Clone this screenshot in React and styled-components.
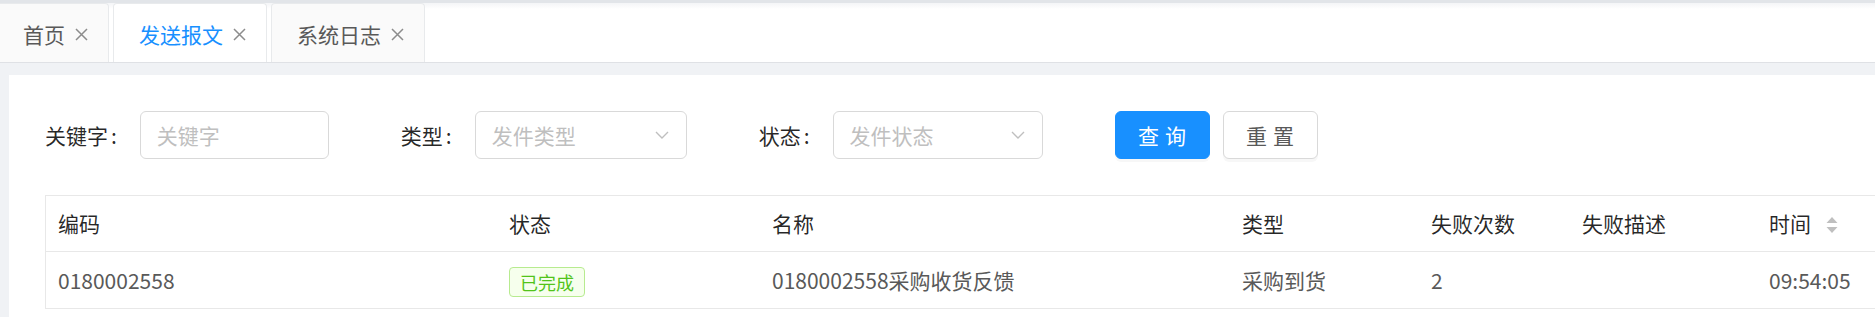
import React from 'react';
import styled, { createGlobalStyle } from 'styled-components';

const GlobalStyle = createGlobalStyle`
    html, body {
        margin: 0;
        padding: 0;
        overflow: hidden;
        background: #f0f2f5;
    }
    body {
        font-family: "Noto Sans CJK SC", "Noto Sans", sans-serif;
    }
`;

const Page = styled.div`
    width: 1875px;
    height: 317px;
    display: flex;
    flex-direction: column;
    overflow: hidden;
    background: #f0f2f5;
`;

// 顶部标签栏
const TopLine = styled.div`
    height: 3px;
    background: #e2e5e9;
`;

const TabBar = styled.div`
    display: flex;
    align-items: flex-end;
    gap: 4px;
    height: 59px;
    background: linear-gradient(#f4f5f7, #ffffff 6px);
    border-bottom: 1px solid #dfe1e5;
`;

const Tab = styled.div`
    display: flex;
    align-items: center;
    height: 59px;
    box-sizing: border-box;
    padding: 2px 20px 0 25px;
    border: 1px solid #e8eaec;
    border-bottom: none;
    border-radius: 4px 4px 0 0;
    background: ${p => (p.$active ? '#ffffff' : '#fafafa')};
    color: ${p => (p.$active ? '#1890ff' : '#595959')};
    font-size: 21px;
    line-height: 1;
    &:first-child {
        margin-left: -3px;
    }
`;

const Close = styled.svg`
    width: 13px;
    height: 13px;
    margin-left: 10px;
`;

// 内容区
const Content = styled.div`
    flex: 1;
    display: flex;
    padding: 12px 0 0 9px;
`;

const Card = styled.div`
    flex: 1;
    background: #ffffff;
    padding: 36px 0 0 36px;
    overflow: hidden;
`;

const FormRow = styled.div`
    display: flex;
    align-items: center;
    height: 48px;
`;

const FormItem = styled.div`
    display: flex;
    align-items: center;
    margin-right: 72px;
`;

const Label = styled.label`
    font-size: 21px;
    color: rgba(0, 0, 0, 0.85);
    white-space: nowrap;
    &::after {
        content: ':';
        margin: 0 23px 0 3px;
    }
`;

const Input = styled.input`
    width: 189px;
    height: 48px;
    box-sizing: border-box;
    padding: 0 16px;
    border: 1px solid #d9d9d9;
    border-radius: 6px;
    font: inherit;
    font-size: 21px;
    color: #595959;
    outline: none;
    &::placeholder {
        color: #bfbfbf;
    }
`;

const Select = styled.div`
    display: flex;
    align-items: center;
    justify-content: space-between;
    width: ${p => p.$width}px;
    height: 48px;
    box-sizing: border-box;
    padding: 0 17px 0 16px;
    border: 1px solid #d9d9d9;
    border-radius: 6px;
    font-size: 21px;
    color: #bfbfbf;
`;

const Buttons = styled.div`
    display: flex;
    gap: 13px;
`;

const Button = styled.button`
    width: 95px;
    height: 48px;
    box-sizing: border-box;
    padding: 0 0 0 6px;
    border: 1px solid ${p => (p.$primary ? '#1890ff' : '#d9d9d9')};
    border-radius: 6px;
    background: ${p => (p.$primary ? '#1890ff' : '#ffffff')};
    color: ${p => (p.$primary ? '#ffffff' : '#595959')};
    font: inherit;
    font-size: 21px;
    letter-spacing: 6px;
    box-shadow: 0 3px 0 rgba(0, 0, 0, 0.03);
`;

// 表格
const Table = styled.table`
    margin-top: 36px;
    width: 1911px;
    table-layout: fixed;
    border-collapse: separate;
    border-spacing: 0;
    border-top: 1px solid #e8e8e8;
    border-left: 1px solid #e8e8e8;
    font-size: 21px;
`;

const Th = styled.th`
    padding: 11px 12px;
    line-height: 33px;
    text-align: left;
    font-weight: 400;
    color: rgba(0, 0, 0, 0.85);
    border-bottom: 1px solid #e8e8e8;
    white-space: nowrap;
`;

const Td = styled.td`
    padding: 11px 12px;
    line-height: 33px;
    color: #595959;
    border-bottom: 1px solid #e8e8e8;
    white-space: nowrap;
`;

const Sorter = styled.svg`
    width: 12px;
    height: 18px;
    margin-left: 15px;
    vertical-align: -2px;
`;

const Tag = styled.span`
    display: inline-block;
    height: 30px;
    line-height: 28px;
    box-sizing: border-box;
    padding: 0 10px;
    border: 1px solid #b7eb8f;
    border-radius: 4px;
    background: #f6ffed;
    color: #52c41a;
    font-size: 18px;
    vertical-align: middle;
`;

const CloseIcon = () => (
    <Close viewBox="0 0 13 13">
        <path d="M1 1 L12 12 M12 1 L1 12" stroke="#8c8c8c" strokeWidth="1.5" fill="none" />
    </Close>
);

const Arrow = () => (
    <svg width="14" height="8" viewBox="0 0 14 8">
        <path d="M1 1 L7 7 L13 1" stroke="#bfbfbf" strokeWidth="1.4" fill="none" />
    </svg>
);

const tabs = [
    { name: '首页' },
    { name: '发送报文', active: true },
    { name: '系统日志' },
];

const columns = [
    { title: '编码', width: 451 },
    { title: '状态', width: 263 },
    { title: '名称', width: 470 },
    { title: '类型', width: 189 },
    { title: '失败次数', width: 151 },
    { title: '失败描述', width: 187 },
    { title: '时间', width: 200, sorter: true },
];

export default function App() {
    return (
        <Page>
            <GlobalStyle />
            <TopLine />
            <TabBar>
                {tabs.map(t => (
                    <Tab key={t.name} $active={t.active}>
                        {t.name}
                        <CloseIcon />
                    </Tab>
                ))}
            </TabBar>
            <Content>
                <Card>
                    <FormRow>
                        <FormItem>
                            <Label>关键字</Label>
                            <Input placeholder="关键字" />
                        </FormItem>
                        <FormItem>
                            <Label>类型</Label>
                            <Select $width={212}>
                                发件类型
                                <Arrow />
                            </Select>
                        </FormItem>
                        <FormItem>
                            <Label>状态</Label>
                            <Select $width={210}>
                                发件状态
                                <Arrow />
                            </Select>
                        </FormItem>
                        <Buttons>
                            <Button $primary>查询</Button>
                            <Button>重置</Button>
                        </Buttons>
                    </FormRow>
                    <Table>
                        <colgroup>
                            {columns.map(c => (
                                <col key={c.title} style={{ width: c.width }} />
                            ))}
                        </colgroup>
                        <thead>
                            <tr>
                                {columns.map(c => (
                                    <Th key={c.title}>
                                        {c.title}
                                        {c.sorter && (
                                            <Sorter viewBox="0 0 12 18">
                                                <path d="M6 1 L11.5 7 L0.5 7 Z" fill="#bfbfbf" />
                                                <path d="M6 17 L11.5 11 L0.5 11 Z" fill="#bfbfbf" />
                                            </Sorter>
                                        )}
                                    </Th>
                                ))}
                            </tr>
                        </thead>
                        <tbody>
                            <tr>
                                <Td>0180002558</Td>
                                <Td><Tag>已完成</Tag></Td>
                                <Td>0180002558采购收货反馈</Td>
                                <Td>采购到货</Td>
                                <Td>2</Td>
                                <Td></Td>
                                <Td>09:54:05</Td>
                            </tr>
                        </tbody>
                    </Table>
                </Card>
            </Content>
        </Page>
    );
}
